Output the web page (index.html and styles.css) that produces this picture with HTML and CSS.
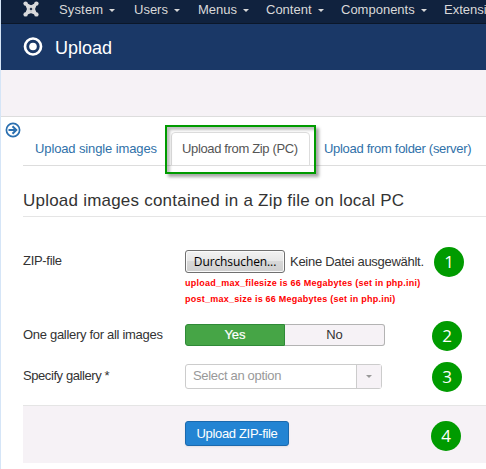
FILE: index.html
```html
<!DOCTYPE html>
<html lang="en">
<head>
<meta charset="utf-8">
<title>Upload</title>
<link rel="stylesheet" href="styles.css">
</head>
<body>
<div class="page">
  <nav class="navbar">
    <svg class="brand" viewBox="0 0 16 16" aria-hidden="true">
      <path d="M4 4 12 12M12 4 4 12" fill="none" stroke="#d9dadc" stroke-width="3"/>
      <path d="M3 3 8 5.500 13 3 11 8 13 13 8 11 3 13 5 8Z" fill="none" stroke="#d9dadc" stroke-width="2"/>
      <path d="M8 6.500 9.500 8 8 9.500 6.500 8Z" fill="#10223e"/>
      <g fill="#d9dadc"><circle cx="2.600" cy="2.600" r="2.200"/><circle cx="13.400" cy="2.600" r="2.200"/><circle cx="2.600" cy="13.400" r="2.200"/><circle cx="13.400" cy="13.400" r="2.200"/></g>
    </svg>
    <a class="item system">System<i class="caret"></i></a>
    <a class="item users">Users<i class="caret"></i></a>
    <a class="item menus">Menus<i class="caret"></i></a>
    <a class="item content">Content<i class="caret"></i></a>
    <a class="item components">Components<i class="caret"></i></a>
    <a class="item">Extensions</a>
  </nav>
  <header class="header">
    <svg class="target" viewBox="0 0 20 20" aria-hidden="true"><circle cx="10" cy="9.500" r="8" fill="none" stroke="#fff" stroke-width="2.700"/><circle cx="10" cy="9.500" r="3.800" fill="#fff"/></svg>
    <h1>Upload</h1>
  </header>
  <div class="subhead"></div>
  <main class="main">
    <svg class="toggle" viewBox="0 0 16 16" aria-hidden="true"><circle cx="8" cy="8" r="6.600" fill="none" stroke="#2a6fb0" stroke-width="1.700"/><path d="M3.500 8h8M7.500 4.200 11.300 8 7.500 11.800" fill="none" stroke="#2a6fb0" stroke-width="2"/></svg>
    <div class="body">
      <div class="tabs">
        <a class="tab single">Upload single images</a>
        <a class="tab active">Upload from Zip (PC)<span class="highlight"></span></a>
        <a class="tab folder">Upload from folder (server)</a>
      </div>
      <h2>Upload images contained in a Zip file on local PC</h2>
      <div class="row file-row">
        <label>ZIP-file</label>
        <div class="control">
          <div class="file"><button class="browse">Durchsuchen...</button><span class="none">Keine Datei ausgewählt.</span></div>
          <div class="limit">upload_max_filesize is 66 Megabytes (set in php.ini)</div>
          <div class="limit">post_max_size is 66 Megabytes (set in php.ini)</div>
        </div>
        <b class="num n1">1</b>
      </div>
      <div class="row switch-row">
        <label>One gallery for all images</label>
        <div class="control switch"><span class="yes">Yes</span><span class="no">No</span></div>
        <b class="num n2">2</b>
      </div>
      <div class="row select-row">
        <label class="specify">Specify gallery *</label>
        <div class="control select"><span class="placeholder">Select an option</span><span class="arrow"><i class="caret"></i></span></div>
        <b class="num n3">3</b>
      </div>
      <div class="actions">
        <button class="submit">Upload ZIP-file</button>
        <b class="num n4">4</b>
      </div>
    </div>
  </main>
</div>
</body>
</html>
```
FILE: styles.css
```css
* { box-sizing: border-box; }
body { margin: 0; font: 13px/18px "Liberation Sans", Arial, sans-serif; color: #333; background: #fff; }
.page { width: 486px; height: 469px; overflow: hidden; border-left: 1px solid #d5e5f7; }
.navbar { display: flex; height: 24px; padding-left: 22px; background: #10223e; border-bottom: 1px solid #0b1729; color: #d9d9d9; }
.brand { width: 16px; height: 16px; margin: 1px 20px 0 0; flex: none; }
.item { display: flex; flex: none; width: 70px; line-height: 19px; white-space: nowrap; }
.item.system { width: 75px; letter-spacing: .15px; }
.item.users { width: 64px; }
.item.menus { width: 68px; }
.item.content { width: 75px; }
.item.components { width: 103px; }
.caret { width: 0; height: 0; border: 3px solid transparent; border-top-color: currentColor; border-bottom: 0; margin: 9px 0 0 6px; }
.header { display: flex; height: 46px; padding: 13px 0 0 22px; background: #1a3867; color: #fff; }
.target { width: 20px; height: 20px; margin-right: 12px; }
h1 { margin: 0; font-size: 18px; line-height: 22px; font-weight: normal; }
.subhead { height: 47px; background: #f6f2f6; border-bottom: 1px solid #ddd; }
.main { display: flex; height: 352px; }
.toggle { width: 16px; height: 16px; margin: 5px 1px 0 4px; flex: none; }
.body { flex: 1; padding: 15px 0 0 1px; }
.tabs { display: flex; height: 34px; border-bottom: 1px solid #ddd; color: #3071a9; }
.tab { white-space: nowrap; line-height: 18px; padding: 8px 0 0 12px; height: 34px; letter-spacing: -.3px; }
.single { width: 148px; letter-spacing: -.12px; }
.active { position: relative; width: 139px; padding: 7px 0 0 10px; color: #555; background: #fff; border: 1px solid #ddd; border-radius: 4px 4px 0 0; letter-spacing: -.35px; }
.highlight { position: absolute; left: -7px; top: -8px; width: 151px; height: 49px; border: 2px solid #009b00; box-shadow: 3px 3px 3px rgba(0,0,0,.35), inset 3px 3px 3px rgba(0,0,0,.25); }
.folder { padding-left: 14px; }
h2 { margin: 0 0 28px; height: 51px; padding-top: 22px; border-bottom: 1px solid #e5e5e5; font-size: 17px; letter-spacing: .22px; line-height: 26px; font-weight: normal; white-space: nowrap; }
.row { display: flex; align-items: flex-start; }
label { width: 162px; flex: none; white-space: nowrap; letter-spacing: -.3px; }
.specify { letter-spacing: -.42px; }
.file-row { height: 78px; }
.file-row label { margin-top: 7px; }
.control { width: 250px; flex: none; }
.file { display: flex; padding-top: 5px; height: 30px; }
button { font: inherit; padding: 0; white-space: nowrap; }
.browse { width: 100px; height: 23px; font: 12px/20px "Open Sans", "Noto Sans", sans-serif; letter-spacing: -.1px; color: #000; border: 1px solid #707070; border-radius: 3px; background: linear-gradient(#f2f2f2, #e7e7e7 48%, #d8d8d8 50%, #cfcfcf); box-shadow: inset 0 0 0 1px #fafafa; }
.none { margin: 2px 0 0 5px; line-height: 20px; white-space: nowrap; letter-spacing: -.28px; }
.limit { height: 16px; color: #f00; font: bold 9px/16px "Liberation Sans", Arial, sans-serif; letter-spacing: .24px; white-space: nowrap; }
.num { display: block; flex: none; width: 30px; height: 30px; border-radius: 50%; background: #009b00; color: #fff; font: 17px/29px "Open Sans", "Noto Sans", sans-serif; text-align: center; }
.n1 { margin: 2px 0 0 -1px; }
.switch-row { height: 40px; }
.switch-row label { margin-top: 3px; }
.switch { display: flex; width: 247px; padding-top: 1px; }
.switch span { width: 100px; height: 22px; line-height: 20px; text-align: center; border: 1px solid #b3b3b3; background: #f6f2f6; border-radius: 0 3px 3px 0; border-left: 0; }
.switch .yes { background: #46a546; border: 1px solid #2f8a37; color: #fff; border-radius: 3px 0 0 3px; -webkit-text-stroke: .2px; }
.n2 { margin: -2px 0 0; }
.select-row { height: 42px; }
.select-row label { margin-top: 4px; }
.select { display: flex; width: 197px; height: 25px; margin: 1px 50px 0 0; border: 1px solid #ccc; border-radius: 3px; color: #999; line-height: 22px; letter-spacing: -.32px; }
.placeholder { flex: 1; padding-left: 7px; }
.arrow { width: 25px; border-left: 1px solid #ccc; background: #f6f2f6; }
.arrow .caret { display: block; margin: 10px 0 0 9px; }
.n3 { margin: -1px 0 0; }
.actions { display: flex; height: 58px; padding: 15px 0 0 162px; border-top: 1px solid #e5e5e5; background: #f6f2f6; }
.submit { width: 104px; height: 25px; color: #fff; background: #2384d3; border: 1px solid #1b69ad; border-radius: 3px; margin-right: 142px; box-shadow: 0 1px 2px rgba(0,0,0,.08); letter-spacing: -.33px; }
```
